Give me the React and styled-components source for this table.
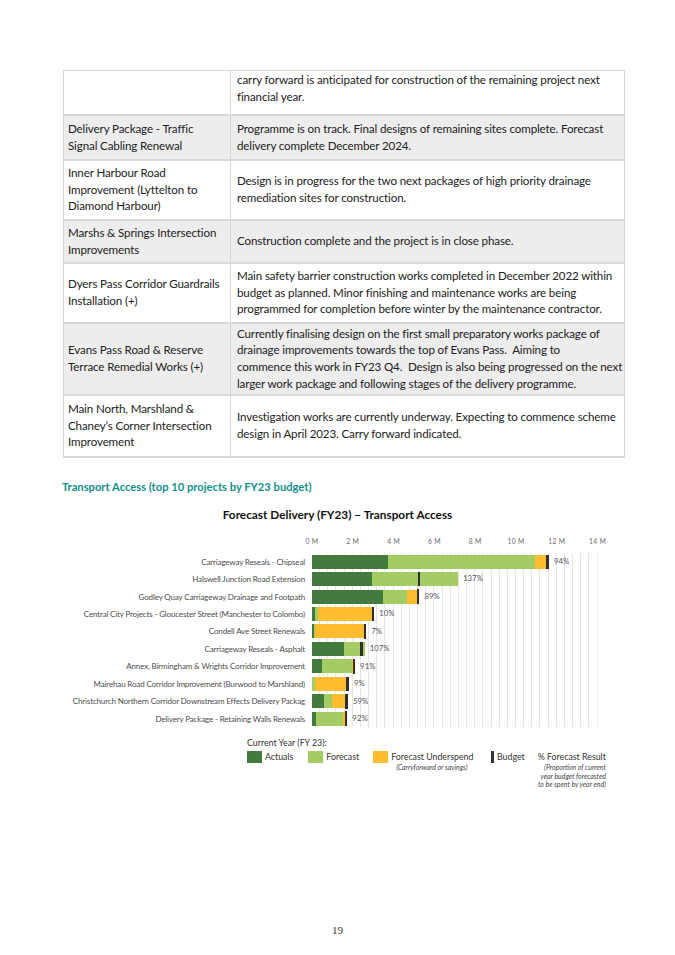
import React from "react";
import styled, { createGlobalStyle } from "styled-components";

const Global = createGlobalStyle`
  html, body { margin: 0; padding: 0; background: #fff; }
  body { font-family: Lato, "Noto Sans", sans-serif; color: #222; }
`;

const Page = styled.div`
  width: 675px;
  height: 955px;
  box-sizing: border-box;
  padding: 70px 50px 0 63px;
  display: flex;
  flex-direction: column;
`;

const Table = styled.div`
  display: grid;
  grid-template-columns: 167px 1fr;
  border-top: 1px solid #d6d6d6;
  border-left: 1px solid #d6d6d6;
`;

const Cell = styled.div`
  box-sizing: border-box;
  height: ${(p) => p.$h}px;
  background: ${(p) => (p.$grey ? "#ededed" : "#fff")};
  border-right: 1px solid #d6d6d6;
  border-bottom: 2px solid #d9d9d9;
  padding: ${(p) => (p.$top ? "1px" : "0")} 4px 0 ${(p) => (p.$wide ? "6px" : "4px")};
  display: flex;
  align-items: ${(p) => (p.$top ? "flex-start" : "center")};
  white-space: pre;
  overflow: hidden;
  font-size: 11.6px;
  letter-spacing: -0.13px;
  line-height: 16.6px;
  color: #222;
`;

const SectionHeading = styled.h3`
  margin: 22px 0 0 -1px;
  font-size: 11.2px;
  line-height: 14px;
  font-weight: 700;
  color: #12908b;
`;

const ChartTitle = styled.div`
  margin-top: 13px;
  text-align: center;
  font-size: 11.8px;
  line-height: 16px;
  font-weight: 700;
  color: #111;
  width: 549px;
`;

const Axis = styled.div`
  margin-top: 13px;
  margin-left: 228.6px;
  display: flex;
`;

const Tick = styled.div`
  width: 40.8px;
  text-align: center;
  font-size: 6.8px;
  line-height: 10px;
  color: #6b6b6b;
  letter-spacing: 0.3px;
`;

const ChartBody = styled.div`
  margin-top: 7px;
  display: grid;
  grid-template-columns: 242px 286px;
  column-gap: 7px;
`;

const Labels = styled.div`
  display: flex;
  flex-direction: column;
`;

const Label = styled.div`
  height: 17.44px;
  display: flex;
  align-items: center;
  justify-content: flex-end;
  font-size: 8px;
  letter-spacing: -0.15px;
  color: #4d4d4d;
  white-space: nowrap;
`;

const Plot = styled.div`
  display: flex;
  flex-direction: column;
  background-image: repeating-linear-gradient(
    to right,
    transparent 0,
    transparent 7.16px,
    #e6e6e6 7.16px,
    #e6e6e6 8.16px
  );
  background-size: 285.6px 100%;
  background-repeat: no-repeat;
`;

const BarRow = styled.div`
  position: relative;
  height: 17.44px;
  display: flex;
  align-items: center;
`;

const Segment = styled.div`
  height: 14px;
  flex: none;
  background: ${(p) => p.$color};
`;

const BudgetMark = styled.div`
  position: absolute;
  top: 1.5px;
  height: 14.5px;
  width: 2.6px;
  background: #2f2f2f;
`;

const Pct = styled.div`
  position: absolute;
  font-size: 7.8px;
  color: #555;
  line-height: 17.44px;
  top: 0;
`;

const Legend = styled.div`
  margin: 10px 0 0 184px;
  display: flex;
  flex-direction: column;
`;

const LegendTitle = styled.div`
  font-size: 8.8px;
  line-height: 12px;
  color: #333;
`;

const LegendRow = styled.div`
  margin-top: 2px;
  display: flex;
  align-items: flex-start;
`;

const LegendItem = styled.div`
  display: flex;
  flex-direction: column;
  margin-right: ${(p) => p.$mr}px;
`;

const ItemTop = styled.div`
  display: flex;
  align-items: center;
  font-size: 8.8px;
  line-height: 12px;
  color: #333;
`;

const Swatch = styled.div`
  width: 15px;
  height: 12px;
  background: ${(p) => p.$color};
  margin-right: 3px;
`;

const BudgetSwatch = styled.div`
  width: 2.6px;
  height: 12px;
  background: #333;
  margin-right: 3px;
`;

const Note = styled.div`
  font-size: 6.9px;
  line-height: 8.4px;
  font-style: italic;
  color: #444;
  text-align: ${(p) => p.$align || "left"};
  padding-left: ${(p) => p.$pl || 0}px;
  white-space: nowrap;
`;

const PageNumber = styled.div`
  margin-top: auto;
  margin-bottom: 19px;
  width: 549px;
  text-align: center;
  font-family: "Liberation Serif", serif;
  font-size: 11px;
  color: #333;
`;

const rows = [
  {
    name: "",
    text: "carry forward is anticipated for construction of the remaining project next\nfinancial year.",
    h: 45,
    top: true,
  },
  {
    name: "Delivery Package - Traffic\nSignal Cabling Renewal",
    text: "Programme is on track. Final designs of remaining sites complete. Forecast\ndelivery complete December 2024.",
    h: 45,
  },
  {
    name: "Inner Harbour Road\nImprovement (Lyttelton to\nDiamond Harbour)",
    text: "Design is in progress for the two next packages of high priority drainage\nremediation sites for construction.",
    h: 60,
  },
  {
    name: "Marshs & Springs Intersection\nImprovements",
    text: "Construction complete and the project is in close phase.",
    h: 43,
  },
  {
    name: "Dyers Pass Corridor Guardrails\nInstallation (+)",
    text: "Main safety barrier construction works completed in December 2022 within\nbudget as planned. Minor finishing and maintenance works are being\nprogrammed for completion before winter by the maintenance contractor.",
    h: 60,
  },
  {
    name: "Evans Pass Road & Reserve\nTerrace Remedial Works (+)",
    text: "Currently finalising design on the first small preparatory works package of\ndrainage improvements towards the top of Evans Pass.  Aiming to\ncommence this work in FY23 Q4.  Design is also being progressed on the next\nlarger work package and following stages of the delivery programme.",
    h: 72,
  },
  {
    name: "Main North, Marshland &\nChaney’s Corner Intersection\nImprovement",
    text: "Investigation works are currently underway. Expecting to commence scheme\ndesign in April 2023. Carry forward indicated.",
    h: 62,
  },
];

const SCALE = 20.4;
const C = { actual: "#437a3d", forecast: "#a3cc64", under: "#fdbd2e" };

const projects = [
  { name: "Carriageway Reseals - Chipseal", a: 3.73, f: 7.2, u: 0.64, b: 11.55, pct: "94%" },
  { name: "Halswell Junction Road Extension", a: 2.94, f: 4.22, u: 0, b: 5.25, pct: "137%" },
  { name: "Godley Quay Carriageway Drainage and Footpath", a: 3.48, f: 1.18, u: 0.49, b: 5.2, pct: "89%" },
  { name: "Central City Projects - Gloucester Street (Manchester to Colombo)", a: 0.15, f: 0.14, u: 2.65, b: 2.99, pct: "10%" },
  { name: "Condell Ave Street Renewals", a: 0.1, f: 0.05, u: 2.4, b: 2.6, pct: "7%" },
  { name: "Carriageway Reseals - Asphalt", a: 1.57, f: 1.01, u: 0, b: 2.44, pct: "107%" },
  { name: "Annex, Birmingham & Wrights Corridor Improvement", a: 0.49, f: 1.47, u: 0.06, b: 2.05, pct: "91%" },
  { name: "Mairehau Road Corridor Improvement (Burwood to Marshland)", a: 0, f: 0.15, u: 1.55, b: 1.75, pct: "9%" },
  { name: "Christchurch Northern Corridor Downstream Effects Delivery Packag", a: 0.59, f: 0.39, u: 0.68, b: 1.7, pct: "59%" },
  { name: "Delivery Package - Retaining Walls Renewals", a: 0.2, f: 1.32, u: 0.1, b: 1.67, pct: "92%" },
];

const ticks = ["0 M", "2 M", "4 M", "6 M", "8 M", "10 M", "12 M", "14 M"];

export default function App() {
  return (
    <>
      <Global />
      <Page>
        <Table>
          {rows.map((r, i) => (
            <React.Fragment key={i}>
              <Cell $h={r.h} $grey={i % 2 === 1} $top={r.top}>
                {r.name}
              </Cell>
              <Cell $h={r.h} $grey={i % 2 === 1} $top={r.top} $wide>
                {r.text}
              </Cell>
            </React.Fragment>
          ))}
        </Table>

        <SectionHeading>Transport Access (top 10 projects by FY23 budget)</SectionHeading>
        <ChartTitle>Forecast Delivery (FY23) – Transport Access</ChartTitle>
        <Axis>
          {ticks.map((t) => (
            <Tick key={t}>{t}</Tick>
          ))}
        </Axis>
        <ChartBody>
          <Labels>
            {projects.map((p) => (
              <Label key={p.name}>{p.name}</Label>
            ))}
          </Labels>
          <Plot>
            {projects.map((p) => {
              const end = (p.a + p.f + p.u) * SCALE;
              const bx = p.b * SCALE;
              const right = Math.max(end, bx + 1.3);
              return (
                <BarRow key={p.name}>
                  <Segment $color={C.actual} style={{ width: p.a * SCALE }} />
                  <Segment $color={C.forecast} style={{ width: p.f * SCALE }} />
                  <Segment $color={C.under} style={{ width: p.u * SCALE }} />
                  <BudgetMark style={{ left: bx - 1.3 }} />
                  <Pct style={{ left: right + 5 }}>{p.pct}</Pct>
                </BarRow>
              );
            })}
          </Plot>
        </ChartBody>

        <Legend>
          <LegendTitle>Current Year (FY 23):</LegendTitle>
          <LegendRow>
            <LegendItem $mr={15}>
              <ItemTop>
                <Swatch $color={C.actual} />
                Actuals
              </ItemTop>
            </LegendItem>
            <LegendItem $mr={14}>
              <ItemTop>
                <Swatch $color={C.forecast} />
                Forecast
              </ItemTop>
            </LegendItem>
            <LegendItem $mr={18}>
              <ItemTop>
                <Swatch $color={C.under} />
                Forecast Underspend
              </ItemTop>
              <Note $pl={23}>(Carryforward or savings)</Note>
            </LegendItem>
            <LegendItem $mr={13}>
              <ItemTop>
                <BudgetSwatch />
                Budget
              </ItemTop>
            </LegendItem>
            <LegendItem $mr={0}>
              <ItemTop>% Forecast Result</ItemTop>
              <Note $align="right">
                (Proportion of current
                <br />
                year budget forecasted
                <br />
                to be spent by year end)
              </Note>
            </LegendItem>
          </LegendRow>
        </Legend>

        <PageNumber>19</PageNumber>
      </Page>
    </>
  );
}
